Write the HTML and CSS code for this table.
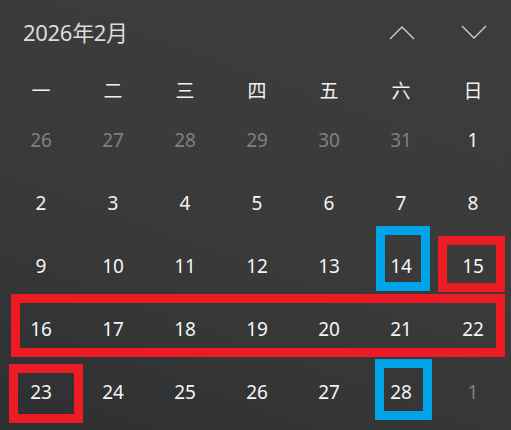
FILE: index.html
```html
<!DOCTYPE html>
<html lang="zh-CN">
<head>
    <meta charset="UTF-8">
    <title>2026年2月</title>
    <link rel="stylesheet" href="styles.css">
</head>
<body>
    <div class="calendar">
        <div class="header">
            <span class="title">2026年2月</span>
            <div class="nav">
                <svg class="chev" width="26" height="15" viewBox="0 0 26 15"><polyline points="1,14 13,2 25,14"/></svg>
                <svg class="chev" width="26" height="15" viewBox="0 0 26 15"><polyline points="1,1 13,13 25,1"/></svg>
            </div>
        </div>

        <div class="weekdays">
            <span>一</span><span>二</span><span>三</span><span>四</span><span>五</span><span>六</span><span>日</span>
        </div>

        <div class="days">
            <span class="muted">26</span><span class="muted">27</span><span class="muted">28</span><span class="muted">29</span><span class="muted">30</span><span class="muted">31</span><span>1</span>
            <span>2</span><span>3</span><span>4</span><span>5</span><span>6</span><span>7</span><span>8</span>
            <span>9</span><span>10</span><span>11</span><span>12</span><span>13</span><span>14</span><span>15</span>
            <span>16</span><span>17</span><span>18</span><span>19</span><span>20</span><span>21</span><span>22</span>
            <span>23</span><span>24</span><span>25</span><span>26</span><span>27</span><span>28</span><span class="muted">1</span>
        </div>

        <!-- marks drawn over the grid -->
        <div class="mark blue m14"></div>
        <div class="mark red m15"></div>
        <div class="mark red mrow"></div>
        <div class="mark red m23"></div>
        <div class="mark blue m28"></div>
    </div>
</body>
</html>
```

FILE: styles.css
```css
body {
    margin: 0;
    background: #3a3a3a;
    font-family: "Noto Sans", "Noto Sans CJK SC", sans-serif;
}
.calendar {
    position: relative;
    width: 511px;
    height: 430px;
    overflow: hidden;
    background: linear-gradient(20deg, #2d2f31 0%, #383838 35%, #3b3b3b 60%, #3c3c3d 100%);
}
.header {
    height: 64px;
    display: flex;
    align-items: center;
    justify-content: space-between;
    padding: 0 23px;
}
.title {
    color: #dcdcdc;
    font-size: 22px;
    letter-spacing: -0.3px;
    margin-bottom: 3px;
}
.nav {
    display: flex;
    gap: 46px;
    padding-right: 1px;
}
.chev polyline {
    fill: none;
    stroke: #cfcfcf;
    stroke-width: 1.4;
}
.weekdays, .days {
    display: grid;
    grid-template-columns: repeat(7, 72px);
    padding-left: 5px;
}
.weekdays {
    margin-top: 8px;
    grid-auto-rows: 36px;
}
.weekdays span {
    display: flex;
    align-items: center;
    justify-content: center;
    color: #f0f0f0;
    font-size: 19px;
}
.days {
    grid-auto-rows: 63px;
}
.days span {
    display: flex;
    align-items: center;
    justify-content: center;
    color: #f4f4f4;
    font-size: 19px;
}
.days .muted {
    color: #808080;
}
.mark {
    position: absolute;
    box-sizing: border-box;
    border: 9px solid;
}
.red { border-color: #ed1c24; }
.blue { border-color: #00a2e8; }
.m14 { left: 376px; top: 226px; width: 54px; height: 65px; }
.m15 { left: 438px; top: 236px; width: 67px; height: 56px; }
.mrow { left: 11px; top: 294px; width: 494px; height: 63px; }
.m23 { left: 9px; top: 364px; width: 74px; height: 59px; }
.m28 { left: 375px; top: 359px; width: 57px; height: 61px; }
```
